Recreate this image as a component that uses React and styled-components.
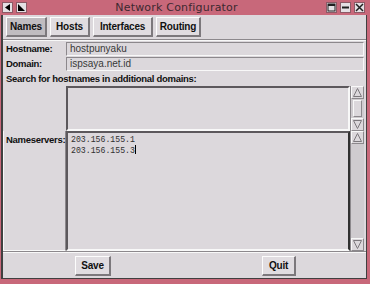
import React from 'react';
import styled, { createGlobalStyle } from 'styled-components';

const Global = createGlobalStyle`
  html, body { margin: 0; padding: 0; background: #c8687a; }
  body { font-family: "Liberation Sans", Arial, sans-serif; }
`;

const Window = styled.div`
  width: 370px;
  height: 284px;
  box-sizing: border-box;
  display: flex;
  flex-direction: column;
  background: #c8687a;
  padding: 0 3px 5px 1px;
`;

const TitleBar = styled.div`
  height: 15px;
  display: flex;
  align-items: center;
  padding: 0 2px 0 1px;
  gap: 3px;
`;

const Title = styled.div`
  flex: 1;
  text-align: center;
  font-family: "DejaVu Sans", sans-serif;
  font-size: 11px;
  color: #3c2830;
  letter-spacing: 0.2px;
`;

const WinButton = styled.div`
  width: 11px;
  height: 11px;
  background: #e4e0e4;
  border: 1px solid #8c5a66;
  box-sizing: border-box;
  display: flex;
  align-items: center;
  justify-content: center;
`;

const Body = styled.div`
  flex: 1;
  display: flex;
  flex-direction: column;
  background: #dcd8dc;
  border-left: 2px solid #404040;
  border-right: 1px solid #404040;
  border-bottom: 1px solid #404040;
`;

const TabBar = styled.div`
  display: flex;
  gap: 3px;
  padding: 2px 3px 2px;
  border-bottom: 1px solid #8c888c;
  box-shadow: 0 1px 0 #f8f8f8;
`;

const Button = styled.div`
  height: 20px;
  box-sizing: border-box;
  display: flex;
  align-items: center;
  justify-content: center;
  font-weight: bold;
  font-size: 10px;
  letter-spacing: -0.2px;
  color: #101010;
  background: ${p => (p.$active ? '#c0bcc0' : '#e0dce0')};
  border-top: 1px solid #fcfcfc;
  border-left: 1px solid #fcfcfc;
  border-right: 2px solid #7c787c;
  border-bottom: 2px solid #7c787c;
  width: ${p => p.$w}px;
  margin-left: ${p => p.$ml || 0}px;
`;

const Form = styled.div`
  flex: 1;
  display: grid;
  grid-template-columns: 63px 1fr;
  grid-template-rows: 15px 15px 14px 45px 1fr;
  padding: 2px 2px 0 0;
`;

const Label = styled.div`
  font-weight: bold;
  font-size: 9.5px;
  letter-spacing: -0.3px;
  color: #101010;
  padding-left: 3px;
  padding-top: ${p => p.$top || 1}px;
  white-space: nowrap;
  grid-column: ${p => (p.$wide ? '1 / span 2' : 'auto')};
`;

const LabelCell = styled(Label)`
  border-right: 1px solid #8c888c;
  border-bottom: 1px solid #f8f8f8;
  border-left: 1px solid #f8f8f8;
  padding-left: 2px;
`;

const Entry = styled.div`
  height: 14px;
  box-sizing: border-box;
  border-top: 1px solid #8c888c;
  border-left: 1px solid #8c888c;
  border-bottom: 1px solid #f8f8f8;
  border-right: 1px solid #f8f8f8;
  background: #dcd8dc;
  font-size: 10px;
  color: #383838;
  padding-left: 3px;
  line-height: 12px;
`;

const ListWrap = styled.div`
  display: flex;
  min-height: 0;
`;

const TextBox = styled.div`
  flex: 1;
  box-sizing: border-box;
  border-top: 2px solid #5c585c;
  border-left: 2px solid #5c585c;
  border-bottom: 2px solid #f8f8f8;
  border-right: 2px solid ${p => (p.$dark ? '#303030' : '#f8f8f8')};
  background: #dcd8dc;
  padding: 2px 3px;
  font-family: "Liberation Mono", "DejaVu Sans Mono", monospace;
  font-size: 8.2px;
  line-height: 10px;
  color: #303030;
`;

const Cursor = styled.span`
  display: inline-block;
  width: 1px;
  height: 9px;
  background: #000;
  vertical-align: -1px;
`;

const Scrollbar = styled.div`
  width: 13px;
  display: flex;
  flex-direction: column;
  background: #cfcbcf;
  border-left: 1px solid #8c888c;
`;

const Arrow = styled.div`
  height: 13px;
  display: flex;
  align-items: center;
  justify-content: center;
  background: #dcd8dc;
  border-top: 1px solid #f8f8f8;
  border-left: 1px solid #f8f8f8;
  border-bottom: 1px solid #8c888c;
  border-right: 1px solid #8c888c;
  box-sizing: border-box;
`;

const Trough = styled.div`
  flex: 1;
  display: flex;
  flex-direction: column;
  padding: 1px 2px;
`;

const Thumb = styled.div`
  flex: 1;
  background: #dcd8dc;
  border-top: 1px solid #f8f8f8;
  border-left: 1px solid #f8f8f8;
  border-bottom: 1px solid #8c888c;
  border-right: 1px solid #8c888c;
`;

const Footer = styled.div`
  height: 25px;
  display: flex;
  align-items: center;
  border-top: 1px solid #8c888c;
  box-shadow: inset 0 1px 0 #f8f8f8;
  padding-top: 1px;
`;

const Tri = ({ up }) => (
  <svg width="9" height="9" viewBox="0 0 9 9">
    <path
      d={up ? 'M4.5 0.5 L8.5 8.5 L0.5 8.5 Z' : 'M0.5 0.5 L8.5 0.5 L4.5 8.5 Z'}
      fill="none"
      stroke="#7c787c"
      strokeWidth="1"
    />
  </svg>
);

const Scroll = ({ thumb }) => (
  <Scrollbar>
    <Arrow><Tri up /></Arrow>
    <Trough>{thumb && <Thumb />}</Trough>
    <Arrow><Tri /></Arrow>
  </Scrollbar>
);

const App = () => (
  <>
    <Global />
    <Window>
      <TitleBar>
        <WinButton>
          <svg width="7" height="7" viewBox="0 0 7 7"><path d="M6 0 L6 7 L1 3.5 Z" fill="#000" /></svg>
        </WinButton>
        <WinButton>
          <svg width="7" height="7" viewBox="0 0 7 7"><path d="M0 0 L7 7 L0 7 Z" fill="#000" /></svg>
        </WinButton>
        <Title>Network Configurator</Title>
        <WinButton>
          <svg width="9" height="9" viewBox="0 0 9 9"><rect x="1" y="1" width="7" height="7" fill="none" stroke="#202020" /><rect x="1" y="1" width="7" height="2" fill="#202020" /></svg>
        </WinButton>
        <WinButton>
          <svg width="9" height="9" viewBox="0 0 9 9"><rect x="1" y="3.5" width="7" height="2" fill="#202020" /></svg>
        </WinButton>
        <WinButton>
          <svg width="9" height="9" viewBox="0 0 9 9"><path d="M1 1 L8 8 M8 1 L1 8" stroke="#202020" strokeWidth="1.5" /></svg>
        </WinButton>
      </TitleBar>
      <Body>
        <TabBar>
          <Button $active $w={41}>Names</Button>
          <Button $w={40}>Hosts</Button>
          <Button $w={60}>Interfaces</Button>
          <Button $w={45}>Routing</Button>
        </TabBar>
        <Form>
          <Label>Hostname:</Label>
          <Entry>hostpunyaku</Entry>
          <Label>Domain:</Label>
          <Entry>ispsaya.net.id</Entry>
          <Label $wide $top={1}>Search for hostnames in additional domains:</Label>
          <Label />
          <ListWrap>
            <TextBox />
            <Scroll thumb />
          </ListWrap>
          <LabelCell $top={3}>Nameservers:</LabelCell>
          <ListWrap>
            <TextBox $dark>
              203.156.155.1<br />
              203.156.155.3<Cursor />
            </TextBox>
            <Scroll />
          </ListWrap>
        </Form>
        <Footer>
          <Button $w={36} $ml={72}>Save</Button>
          <Button $w={34} $ml={151}>Quit</Button>
        </Footer>
      </Body>
    </Window>
  </>
);

export default App;
